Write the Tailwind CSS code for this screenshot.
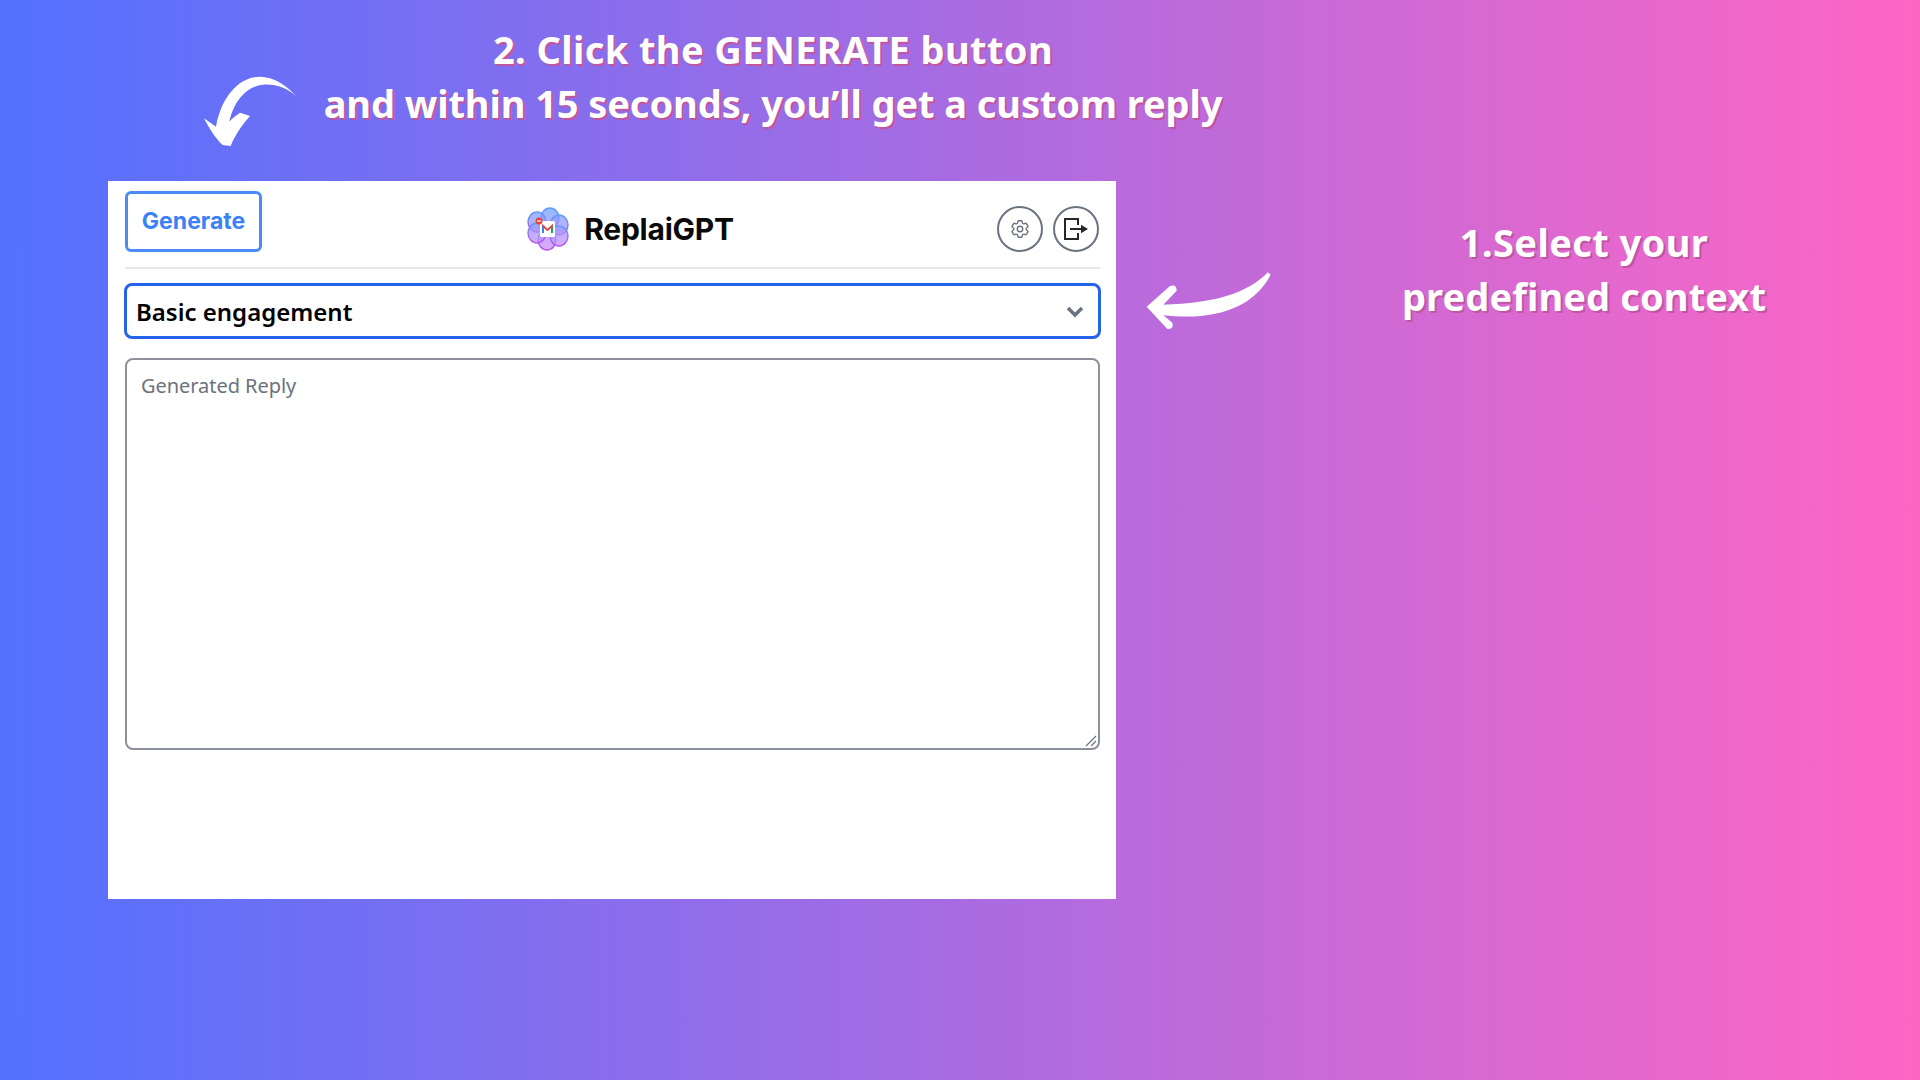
<!DOCTYPE html>
<html>
<head>
<meta charset="utf-8">
<script src="https://cdn.jsdelivr.net/npm/@tailwindcss/browser@4"></script>
</head>
<body class="m-0">
<div class="relative w-[1920px] h-[1080px] overflow-hidden bg-[linear-gradient(90deg,#5271ff,#ff66c4)] font-['Noto_Sans',sans-serif]">
  <div class="absolute left-[308px] top-[22px] w-[930px] text-center text-white font-bold text-[38px] leading-[54px] [text-shadow:2px_2px_0_#c0569f]">
    <p class="tracking-[0.4px]">2. Click the GENERATE button</p>
    <p class="tracking-[-0.08px]">and within 15 seconds, you’ll get a custom reply</p>
  </div>
  <div class="absolute left-[1384px] top-[215px] w-[400px] text-center text-white font-bold text-[38px] leading-[54px] [text-shadow:2px_2px_0_#c0569f]">
    <p class="tracking-[0.4px]">1.Select your</p>
    <p class="tracking-[0.12px]">predefined context</p>
  </div>
  <svg class="absolute left-[200px] top-[75px]" width="100" height="80" viewBox="60 165 300 240"><path fill="#fff" d="M352 232 C320 195 280 170 240 170 C180 170 125 225 108 320 L72 295 C85 320 105 355 128 375 L152 378 C165 345 190 310 210 288 L180 278 C170 285 155 295 148 305 C160 250 195 198 250 194 C290 192 325 205 352 232 Z"/></svg>
  <svg class="absolute left-[1143px] top-[270px]" width="130" height="63" viewBox="489 240 390 189"><path fill="#fff" d="M864 247 C800 312 700 340 550 344 L590 302 Q590 282 570 288 L500 350 L562 417 Q582 418 577 398 L550 376 C720 394 825 345 872 254 Z"/></svg>

  <div class="absolute left-[108px] top-[181px] w-[1008px] h-[718px] bg-white pl-[17px] pr-[16px] pt-[10px]">
    <div class="flex items-start justify-between h-[78px] border-b-2 border-[#e5e7eb]">
      <button class="w-[137px] h-[61px] pb-[1px] rounded-md border-[3px] border-[#4b8bf5] bg-white text-[#3b82f6] font-['Inter',sans-serif] font-bold text-[23px]">Generate</button>
      <div class="flex items-center gap-[15px] ml-[2px] mt-[16px]">
        <svg width="42" height="44" viewBox="0 0 42 44">
          <defs>
            <linearGradient id="g" x1="0" y1="0" x2="0" y2="1"><stop offset="0" stop-color="#5f9dff"/><stop offset="1" stop-color="#b84ff5"/></linearGradient>
            <linearGradient id="f" gradientUnits="userSpaceOnUse" x1="0" y1="0" x2="0" y2="44"><stop offset="0" stop-color="#6aa5ff"/><stop offset="1" stop-color="#d98af8"/></linearGradient>
          </defs>
          <g fill="url(#f)" fill-opacity="0.75" stroke="url(#g)" stroke-width="1.4">
            <ellipse cx="23" cy="11" rx="9" ry="10"/>
            <ellipse cx="20" cy="33" rx="9" ry="10"/>
            <ellipse cx="10" cy="15" rx="9" ry="10"/>
            <ellipse cx="32" cy="18" rx="9" ry="10"/>
            <ellipse cx="10" cy="26" rx="9" ry="10"/>
            <ellipse cx="32" cy="29" rx="9" ry="10"/>
          </g>
          <rect x="13" y="14" width="15" height="16" rx="1.5" fill="#fff"/>
          <path d="M16 26 V19 L20.500 23 L25 19 V26" fill="none" stroke="#dc4a3d" stroke-width="2"/>
          <path d="M16 26 V19" stroke="#3b82f6" stroke-width="2"/>
          <path d="M25 26 V19" stroke="#22a06b" stroke-width="2"/>
          <circle cx="12" cy="14" r="3.500" fill="#ea4335"/>
          <path d="M10 14 H14" stroke="#fff" stroke-width="1.200"/>
        </svg>
        <span class="font-['Inter',sans-serif] font-bold text-[30px] text-[#0a0a0a] tracking-[-0.25px] leading-none">ReplaiGPT</span>
      </div>
      <div class="flex gap-[10px] mt-[15px] mr-[1px]">
        <div class="w-[46px] h-[46px] rounded-full border-2 border-[#6b7280] flex items-center justify-center">
          <svg width="22" height="22" viewBox="0 0 24 24" fill="none" stroke="#6b7280" stroke-width="1.500" stroke-linecap="round" stroke-linejoin="round"><path d="M9.594 3.940c.09-.542.56-.94 1.110-.94h2.593c.55 0 1.020.398 1.110.940l.213 1.281c.063.374.313.686.645.870.074.040.147.083.220.127.325.196.720.257 1.075.124l1.217-.456a1.125 1.125 0 0 1 1.370.490l1.296 2.247a1.125 1.125 0 0 1-.260 1.431l-1.003.827c-.293.241-.438.613-.430.992a7.723 7.723 0 0 1 0 .255c-.008.378.137.750.430.991l1.004.827c.424.350.534.955.260 1.430l-1.298 2.247a1.125 1.125 0 0 1-1.369.491l-1.217-.456c-.355-.133-.750-.072-1.076.124a6.470 6.470 0 0 1-.220.128c-.331.183-.581.495-.644.869l-.213 1.281c-.090.543-.560.940-1.110.940h-2.594c-.550 0-1.019-.398-1.110-.940l-.213-1.281c-.062-.374-.312-.686-.644-.870a6.520 6.520 0 0 1-.220-.127c-.325-.196-.720-.257-1.076-.124l-1.217.456a1.125 1.125 0 0 1-1.369-.490l-1.297-2.247a1.125 1.125 0 0 1 .260-1.431l1.004-.827c.292-.240.437-.613.430-.991a6.932 6.932 0 0 1 0-.255c.007-.380-.138-.751-.430-.992l-1.004-.827a1.125 1.125 0 0 1-.260-1.430l1.297-2.247a1.125 1.125 0 0 1 1.370-.491l1.216.456c.356.133.751.072 1.076-.124.072-.044.146-.086.220-.128.332-.183.582-.495.644-.869l.214-1.280Z"/><path d="M15 12a3 3 0 1 1-6 0 3 3 0 0 1 6 0Z"/></svg>
        </div>
        <div class="w-[46px] h-[46px] rounded-full border-2 border-[#6b7280] flex items-center justify-center">
          <svg width="26" height="26" viewBox="0 0 26 26" fill="none" stroke="#27272a" stroke-width="2"><path d="M15 9 V3 H2 V23 H15 V17"/><path d="M7 13 H21"/><path d="M18 8.800 L25 13 L18 17.200 Z" fill="#27272a" stroke="none"/></svg>
        </div>
      </div>
    </div>
    <div class="relative mt-[14px] -ml-[1px] mr-[-1px] h-[56px] rounded-lg border-[3px] border-[#2563eb] flex items-center pl-[9px]">
      <span class="text-[24px] font-semibold text-black leading-none pt-[2px]">Basic engagement</span>
      <svg class="absolute right-[14px] top-[20px]" width="18" height="12" viewBox="0 0 18 12" fill="none" stroke="#6b7280" stroke-width="3.500" stroke-linejoin="miter"><path d="M2 2 L9 9 L16 2"/></svg>
    </div>
    <div class="relative mt-[19px] h-[392px] rounded-lg border-2 border-[#8b909b] pl-[14px] pt-[12px] text-[20px] tracking-[-0.05px] leading-[28px] text-[#6b7280]">
      Generated Reply
      <svg class="absolute right-[1px] bottom-[1px]" width="12" height="12" viewBox="0 0 12 12" fill="none" stroke="#6b7280" stroke-width="1.200"><path d="M1 11 L11 1 M6 11 L11 6"/></svg>
    </div>
  </div>
</div>
</body>
</html>
